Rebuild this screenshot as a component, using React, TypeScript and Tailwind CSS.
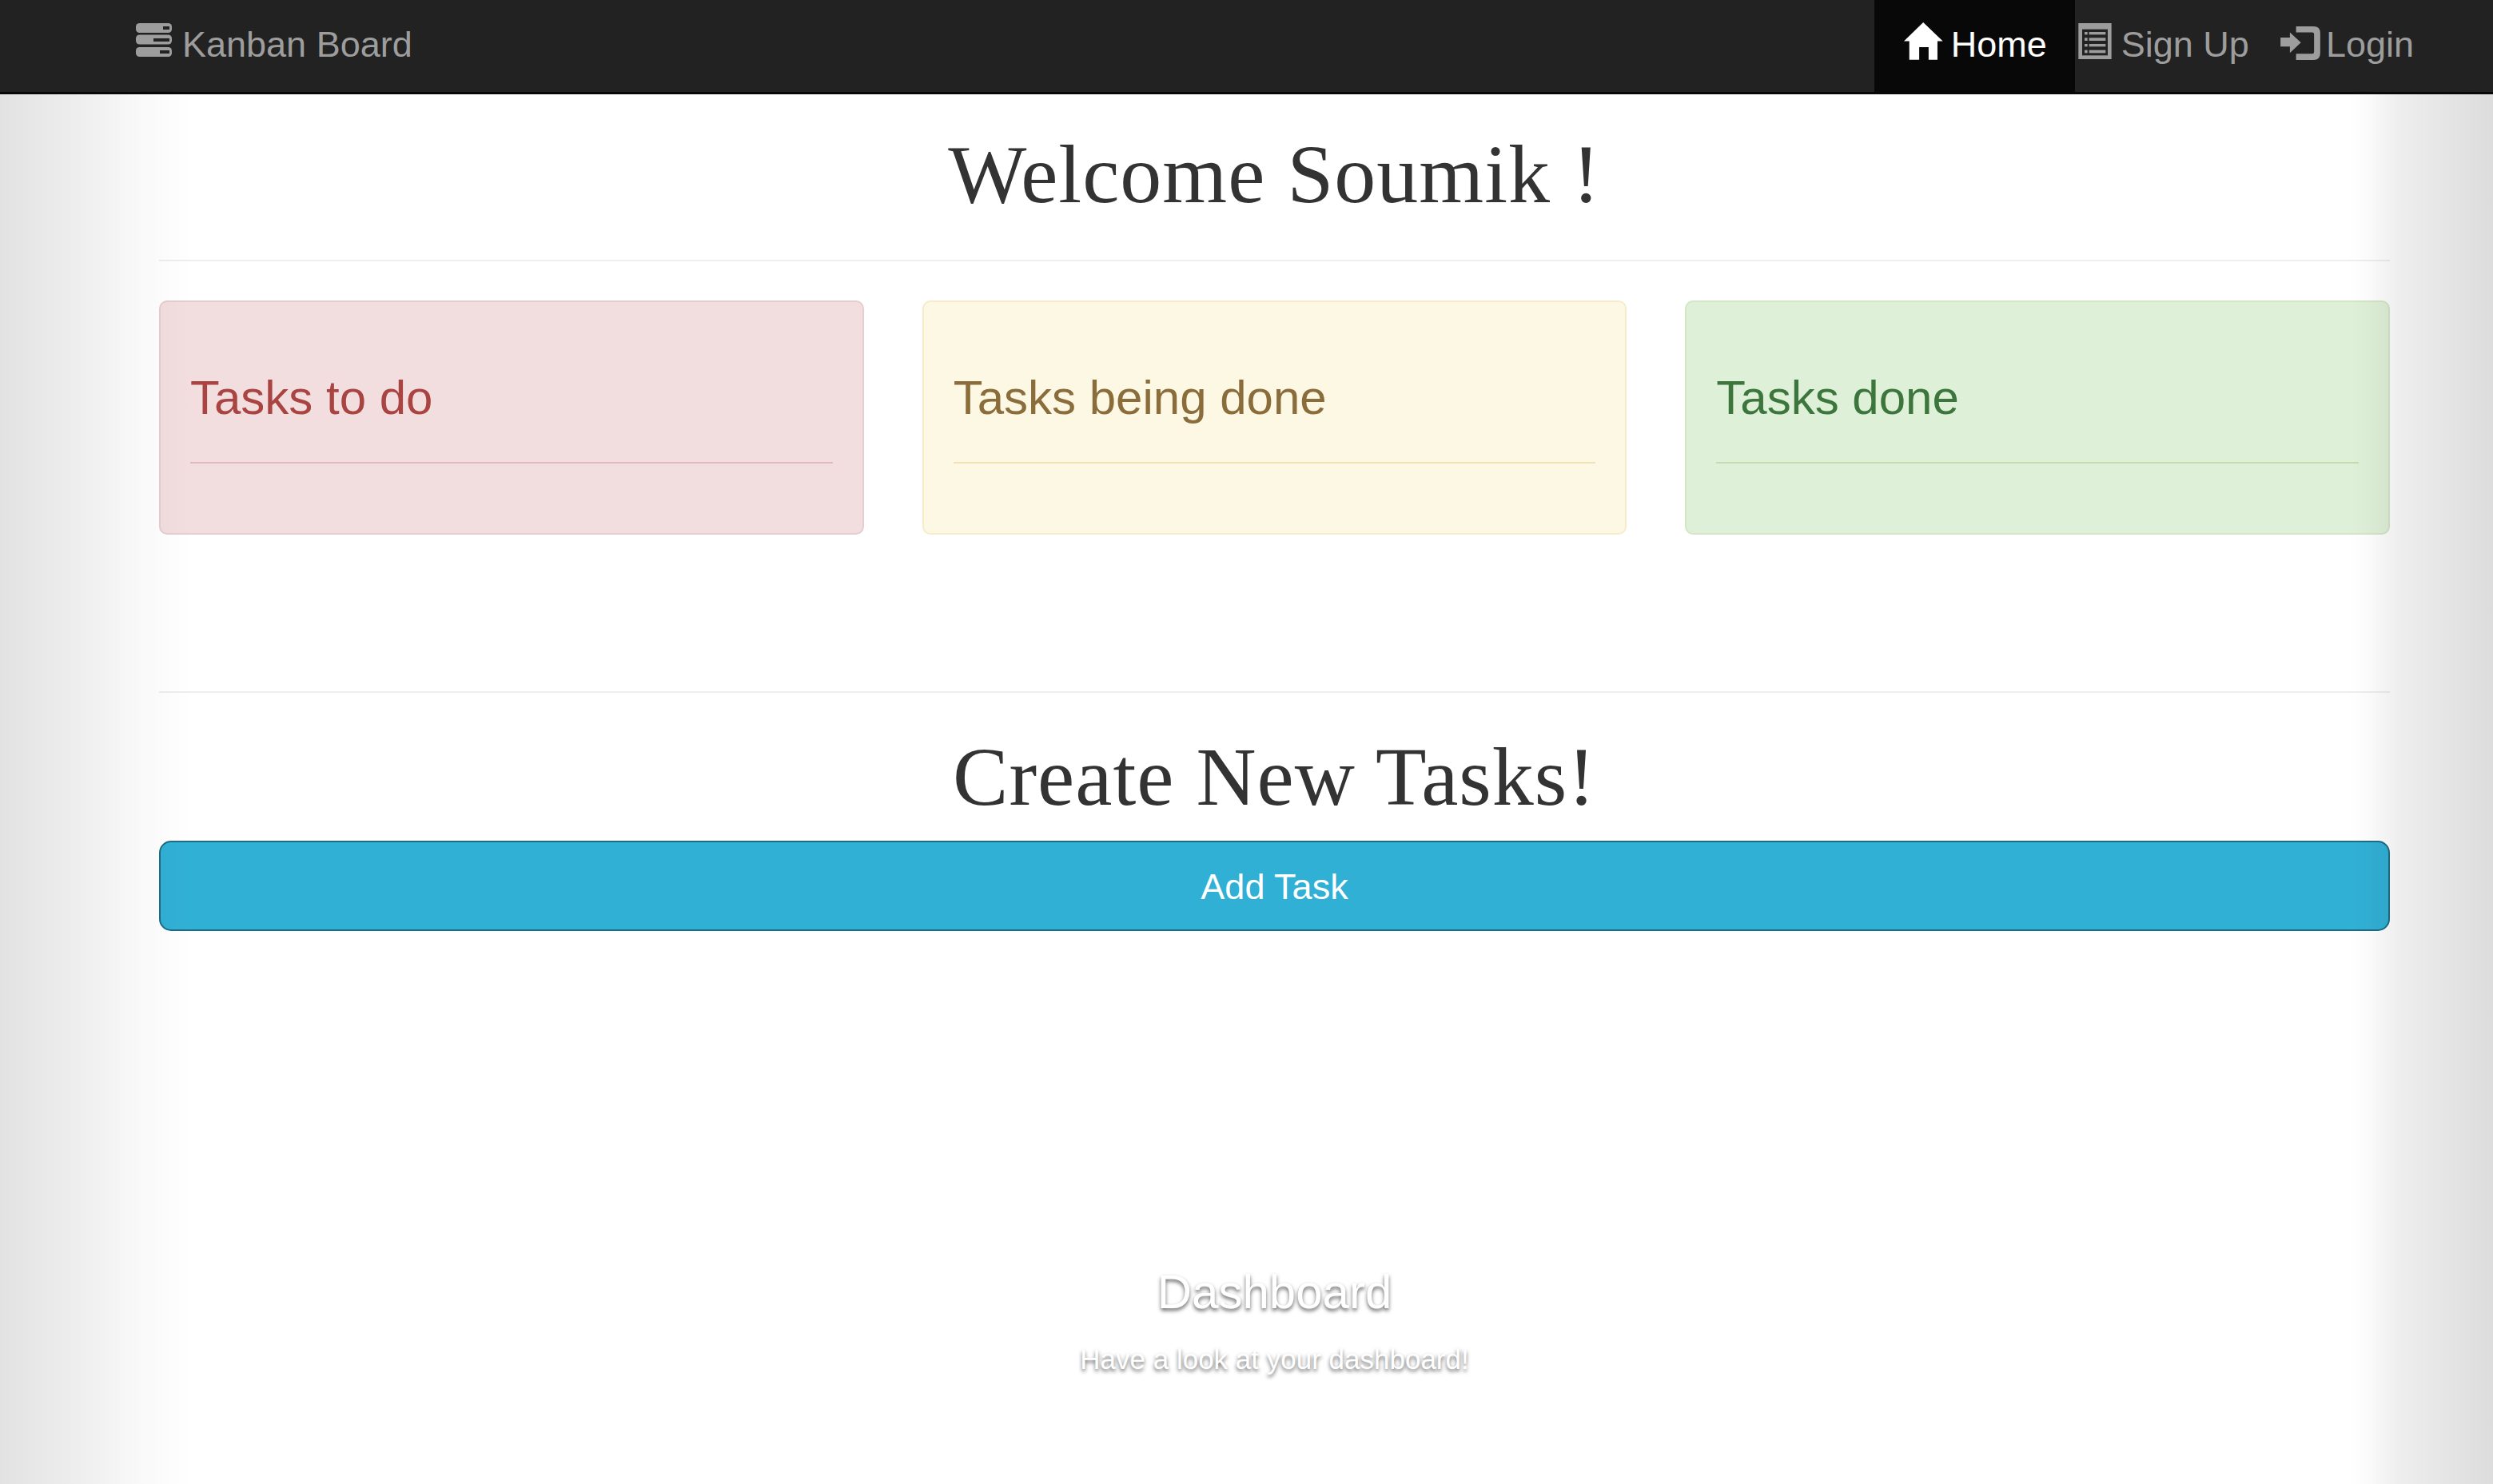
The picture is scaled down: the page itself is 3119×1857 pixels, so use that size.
const panels = [
  {
    title: "Tasks to do",
    box: "bg-[#f2dede] border-[#e5cdd2] text-[#a94442]",
    rule: "bg-[#dfb8c0]",
  },
  {
    title: "Tasks being done",
    box: "bg-[#fcf8e3] border-[#f7ebcc] text-[#8a6d3b]",
    rule: "bg-[#f3e1b8]",
  },
  {
    title: "Tasks done",
    box: "bg-[#dff0d8] border-[#d3e6c6] text-[#3c763d]",
    rule: "bg-[#c5dcb0]",
  },
];

function TasksIcon() {
  return (
    <svg width="45" height="42" viewBox="0 0 45 42" className="-mt-[12px] shrink-0" fill="#9d9d9d">
      <rect x="0" y="0" width="45" height="12" rx="4.5" />
      <rect x="0" y="14.5" width="45" height="12" rx="4.5" />
      <rect x="0" y="30" width="45" height="12" rx="4.5" />
      <rect x="34" y="4" width="8" height="4" fill="#222222" />
      <rect x="22" y="19" width="20" height="4" fill="#222222" />
      <rect x="30" y="34" width="12" height="4" fill="#222222" />
    </svg>
  );
}

function HomeIcon() {
  return (
    <svg width="49" height="47" viewBox="38 38 146 140" className="-mt-[10px] shrink-0" fill="#ffffff">
      <path d="M110 38 L183 108 H163 V177 H130 V130 H95 V177 H58 V108 H38 Z" />
    </svg>
  );
}

function ListIcon() {
  return (
    <svg width="42" height="45" viewBox="693 42 124 135" className="-mt-[9px] shrink-0">
      <rect x="693" y="42" width="124" height="135" fill="#9d9d9d" />
      <rect x="707" y="65" width="96" height="98" fill="#222222" />
      <g fill="#9d9d9d">
        <rect x="716" y="75" width="11" height="10" />
        <rect x="733" y="75" width="62" height="10" />
        <rect x="716" y="97" width="11" height="11" />
        <rect x="733" y="97" width="62" height="11" />
        <rect x="716" y="120" width="11" height="10" />
        <rect x="733" y="120" width="62" height="10" />
        <rect x="716" y="143" width="11" height="11" />
        <rect x="733" y="143" width="62" height="11" />
      </g>
    </svg>
  );
}

function LoginIcon() {
  return (
    <svg width="50" height="42" viewBox="37 53 148 125" className="-mt-[5px] shrink-0" fill="#9d9d9d">
      <path d="M95 53 H160 Q185 53 185 78 V153 Q185 178 160 178 H95 V155 H155 Q162 155 162 148 V82 Q162 75 155 75 H95 Z" />
      <path d="M37 95 H72 V75 L113 113 L72 152 V128 H37 Z" />
    </svg>
  );
}

export default function App() {
  return (
    <div className="relative min-h-screen overflow-hidden bg-white font-['Liberation_Sans',Arial,sans-serif]">
      {/* Navigation */}
      <nav className="flex h-[118px] items-start justify-between border-b-[3px] border-[#080808] bg-[#222222] pl-[170px] pr-[99px]">
        <a className="flex h-[115px] items-center gap-[13px] pb-[3px] text-[45px] leading-[50px] text-[#9d9d9d]">
          <TasksIcon />
          Kanban Board
        </a>
        <div className="flex h-[115px] items-center">
          <a className="flex h-[115px] items-center gap-[10px] bg-[#080808] pb-[3px] pl-[37px] pr-[35px] text-[45px] leading-[50px] text-white">
            <HomeIcon />
            Home
          </a>
          <a className="ml-[4px] flex items-center gap-[12px] pb-[3px] text-[45px] leading-[50px] text-[#9d9d9d]">
            <ListIcon />
            Sign Up
          </a>
          <a className="ml-[39px] flex items-center gap-[7px] pb-[3px] text-[45px] leading-[50px] text-[#9d9d9d]">
            <LoginIcon />
            Login
          </a>
        </div>
      </nav>

      <main className="pl-[199px] pr-[129px]">
        <h1 className="mt-[45px] text-center font-['Liberation_Serif','Times_New_Roman',serif] text-[104px] leading-[110px] tracking-[1px] text-[#333333]">
          Welcome Soumik !
        </h1>
        <div className="mt-[52px] h-[2px] bg-[#eeeeee]" />

        {/* Task panels */}
        <div className="mt-[49px] grid grid-cols-3 gap-[73px]">
          {panels.map((panel) => (
            <div key={panel.title} className={`rounded-[10px] border-2 px-[37px] pb-[87px] pt-[87px] ${panel.box}`}>
              <h3 className="text-[60px] leading-[66px]">{panel.title}</h3>
              <div className={`mt-[47px] h-[2px] ${panel.rule}`} />
            </div>
          ))}
        </div>

        <div className="mt-[196px] h-[2px] bg-[#eeeeee]" />
        <h2 className="mt-[50px] text-center font-['Liberation_Serif','Times_New_Roman',serif] text-[104px] leading-[110px] tracking-[1px] text-[#333333]">
          Create New Tasks!
        </h2>
        <button className="mt-[25px] block h-[113px] w-full rounded-[15px] border-2 border-[#1b6d85] bg-[#31b0d5] pt-[2px] text-[45px] text-white">
          Add Task
        </button>

        {/* Caption */}
        <div className="text-center text-white [text-shadow:0_2.5px_5px_rgba(0,0,0,0.6)]">
          <h3 className="mt-[419px] text-[60px] leading-[66px]">Dashboard</h3>
          <p className="mt-[26px] text-[35px] leading-[50px]">Have a look at your dashboard!</p>
        </div>
      </main>

      {/* Soft grey edges over the page */}
      <div className="pointer-events-none absolute bottom-0 left-0 top-[118px] w-[240px] bg-[linear-gradient(to_right,rgba(0,0,0,0.114)_0,rgba(0,0,0,0.067)_100px,rgba(0,0,0,0.027)_170px,rgba(0,0,0,0)_240px)]" />
      <div className="pointer-events-none absolute bottom-0 right-0 top-[118px] w-[180px] bg-[linear-gradient(to_left,rgba(0,0,0,0.137)_0,rgba(0,0,0,0.086)_86px,rgba(0,0,0,0.067)_119px,rgba(0,0,0,0.02)_155px,rgba(0,0,0,0)_180px)]" />
    </div>
  );
}
